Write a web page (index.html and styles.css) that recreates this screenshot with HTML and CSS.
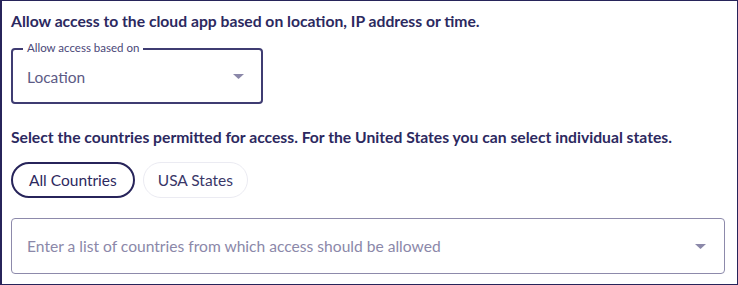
FILE: index.html
```html
<!DOCTYPE html>
<html>
<head>
<meta charset="utf-8">
<link rel="stylesheet" href="styles.css">
</head>
<body>
<div class="panel">
  <p class="title">Allow access to the cloud app based on location, IP address or time.</p>
  <div class="select">
    <span class="legend">Allow access based on</span>
    <span class="value">Location</span>
    <svg class="caret" width="11" height="5" viewBox="0 0 11 5"><path d="M0 0H11L5.5 5Z" fill="#8b88a9"/></svg>
  </div>
  <p class="title second">Select the countries permitted for access. For the United States you can select individual states.</p>
  <div class="pills">
    <button class="pill active">All Countries</button>
    <button class="pill">USA States</button>
  </div>
  <div class="input">
    <span class="placeholder">Enter a list of countries from which access should be allowed</span>
    <svg class="caret" width="11" height="5" viewBox="0 0 11 5"><path d="M0 0H11L5.5 5Z" fill="#8b88a9"/></svg>
  </div>
</div>
</body>
</html>
```
FILE: styles.css
```css
* { box-sizing: border-box; }
html, body { margin: 0; padding: 0; background: #fff; }
body { font-family: Lato, "Noto Sans", sans-serif; }
.panel {
  width: 738px;
  height: 285px;
  border: 1px solid #27245a;
  border-left-width: 2px;
  padding: 10px 12px 0 9px;
}
.title {
  margin: 0;
  font-size: 15.7px;
  font-weight: 700;
  color: #2c2960;
  line-height: 20px;
}
.select {
  position: relative;
  margin-top: 17px;
  width: 252px;
  height: 56px;
  border: 2px solid #3f3c72;
  border-radius: 4px;
  display: flex;
  align-items: center;
  justify-content: space-between;
  padding: 1px 17px 0 14px;
}
.legend {
  position: absolute;
  top: -9px;
  left: 10px;
  background: #fff;
  padding: 0 4px;
  font-size: 11.5px;
  line-height: 14px;
  color: #4a4778;
}
.value { font-size: 15.5px; color: #5c5a85; }
.second { margin-top: 23px; }
.pills { display: flex; gap: 8px; margin-top: 15px; }
.pill {
  font-family: inherit;
  height: 36px;
  border-radius: 18px;
  background: #fff;
  font-size: 15.5px;
  color: #3a3768;
  padding: 0 14px;
  border: 1px solid #ebebf2;
}
.pill.active {
  border: 2px solid #27245a;
  color: #2c2960;
  padding: 0 16px;
}
.input {
  margin-top: 20px;
  width: 714px;
  height: 56px;
  border: 1px solid #8d8aab;
  border-radius: 4px;
  display: flex;
  align-items: center;
  justify-content: space-between;
  padding: 0 18px 0 15px;
}
.placeholder { font-size: 15.6px; color: #8b88a9; }
```
